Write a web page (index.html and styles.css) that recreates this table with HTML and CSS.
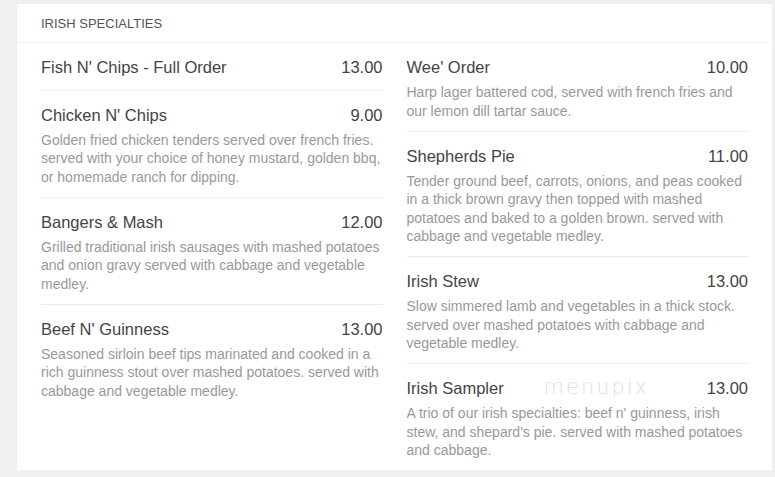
FILE: index.html
```html
<!DOCTYPE html>
<html>
<head>
<meta charset="utf-8">
<link rel="stylesheet" href="styles.css">
</head>
<body>
<div class="card">
  <div class="card-header">IRISH SPECIALTIES</div>
  <div class="columns">
    <div class="col">
      <div class="item no-desc">
        <div class="item-top"><span class="name">Fish N' Chips - Full Order</span><span class="price">13.00</span></div>
      </div>
      <div class="item">
        <div class="item-top"><span class="name">Chicken N' Chips</span><span class="price">9.00</span></div>
        <div class="desc">Golden fried chicken tenders served over french fries. served with your choice of honey mustard, golden bbq, or homemade ranch for dipping.</div>
      </div>
      <div class="item">
        <div class="item-top"><span class="name">Bangers &amp; Mash</span><span class="price">12.00</span></div>
        <div class="desc">Grilled traditional irish sausages with mashed potatoes and onion gravy served with cabbage and vegetable medley.</div>
      </div>
      <div class="item last">
        <div class="item-top"><span class="name">Beef N' Guinness</span><span class="price">13.00</span></div>
        <div class="desc">Seasoned sirloin beef tips marinated and cooked in a rich guinness stout over mashed potatoes. served with cabbage and vegetable medley.</div>
      </div>
    </div>
    <div class="col">
      <div class="item">
        <div class="item-top"><span class="name">Wee' Order</span><span class="price">10.00</span></div>
        <div class="desc">Harp lager battered cod, served with french fries and our lemon dill tartar sauce.</div>
      </div>
      <div class="item">
        <div class="item-top"><span class="name">Shepherds Pie</span><span class="price">11.00</span></div>
        <div class="desc">Tender ground beef, carrots, onions, and peas cooked in a thick brown gravy then topped with mashed potatoes and baked to a golden brown. served with cabbage and vegetable medley.</div>
      </div>
      <div class="item">
        <div class="item-top"><span class="name">Irish Stew</span><span class="price">13.00</span></div>
        <div class="desc">Slow simmered lamb and vegetables in a thick stock. served over mashed potatoes with cabbage and vegetable medley.</div>
      </div>
      <div class="item last">
        <div class="item-top"><span class="name">Irish Sampler</span><span class="price">13.00</span></div>
        <div class="desc">A trio of our irish specialties: beef n' guinness, irish stew, and shepard's pie. served with mashed potatoes and cabbage.</div>
        <span class="watermark">menupix</span>
      </div>
    </div>
  </div>
</div>
</body>
</html>
```

FILE: styles.css
```css
html, body {
  margin: 0;
  padding: 0;
  background: #f0f0f3;
  font-family: "Liberation Sans", Arial, sans-serif;
}
body {
  padding: 3px 0 0 17px;
}
.card {
  width: 755px;
  background: #fff;
  border-top: 1px solid #ececef;
  box-sizing: border-box;
}
.card-header {
  height: 36px;
  line-height: 36px;
  padding: 2px 24px 0;
  font-size: 13px;
  color: #555;
  border-bottom: 1px solid #f1f1f3;
}
.columns {
  display: grid;
  grid-template-columns: 1fr 1fr;
  column-gap: 24px;
  padding: 0 24px;
}
.item {
  padding: 14px 0 10.5px;
  border-bottom: 1px solid #ededed;
  position: relative;
}
.item.no-desc {
  padding-bottom: 12.5px;
}
.item.last {
  border-bottom: none;
}
.item-top {
  display: flex;
  justify-content: space-between;
  font-size: 16.5px;
  line-height: 20px;
  color: #444;
}
.desc {
  margin-top: 6px;
  font-size: 14px;
  line-height: 18.5px;
  color: #999;
}
.watermark {
  position: absolute;
  left: 137px;
  top: 11px;
  font-family: "DejaVu Sans", sans-serif;
  font-weight: 200;
  font-size: 21px;
  color: rgba(170, 170, 170, 0.4);
  letter-spacing: 2px;
  pointer-events: none;
}
```
